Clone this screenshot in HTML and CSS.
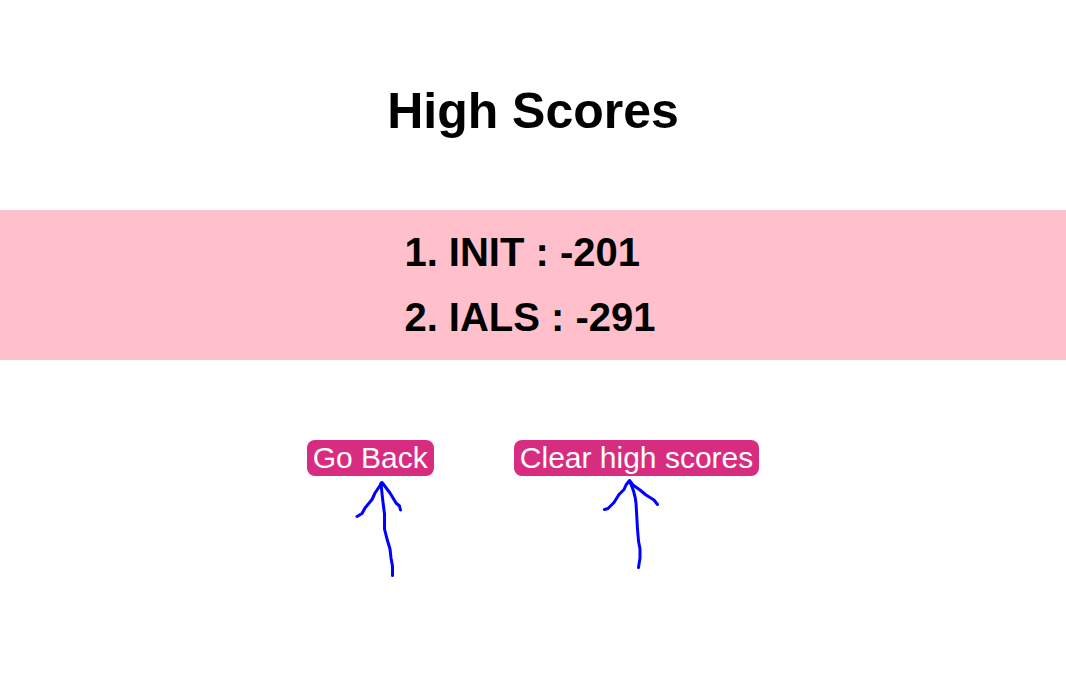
FILE: index.html
```html
<!DOCTYPE html>
<html lang="en">
<head>
<meta charset="utf-8">
<meta name="viewport" content="width=device-width, initial-scale=1">
<title>High Scores</title>
<link rel="stylesheet" href="styles.css">
</head>
<body>
<main class="page">
  <h1 class="title">High Scores</h1>
  <section class="scores" aria-label="Scores">
    <ol class="score-list">
      <li>1. INIT : -201</li>
      <li>2. IALS : -291</li>
    </ol>
  </section>
  <div class="actions">
    <div class="action">
      <button class="button" type="button">Go Back</button>
      <svg class="pen-mark pen-mark-back" width="80" height="109" viewBox="0 6 80 109" fill="none" stroke="#0000ff" stroke-width="3" stroke-linecap="round" stroke-linejoin="round">
        <path d="M 41 13 C 42 25 43 33 44.5 44 L 44.5 59 L 47 69 L 50 79 L 51 88 L 52.5 96 L 52.5 105.5"/>
        <path d="M 17 46.5 L 22 43.5 L 25 38 L 32 29.5 L 35 23 L 41 14 L 42 12.5 L 44 15 L 50 23 L 56 33 L 59.5 36 L 60.5 40"/>
      </svg>
    </div>
    <div class="action">
      <button class="button" type="button">Clear high scores</button>
      <svg class="pen-mark pen-mark-clear" width="80" height="109" viewBox="0 6 80 109" fill="none" stroke="#0000ff" stroke-width="3" stroke-linecap="round" stroke-linejoin="round">
        <path d="M 39.5 11 C 43 18 45 23 46 33 L 47.5 59 L 48.5 71 L 50 79 L 50 88 L 48.5 97.5"/>
        <path d="M 14.5 39.5 L 18 38.5 L 24 32.5 L 29 24.5 L 34 19.5 L 36 15 L 39.5 10.5 L 43 15 L 50 20 L 56 25 L 64 30 L 67.5 34.5"/>
      </svg>
    </div>
  </div>
</main>
</body>
</html>
```

FILE: styles.css
```css
body {
  margin: 0;
  background: #fff;
  color: #000;
  font-family: "Liberation Sans", Arial, sans-serif;
}

.page {
  box-sizing: border-box;
  min-height: 100vh;
  padding-top: 80px;
}

.title {
  margin: 0 0 68px;
  font-size: 50px;
  line-height: 62px;
  text-align: center;
}

.scores {
  display: flex;
  justify-content: center;
  padding: 10px 0;
  background: #ffc0cb;
}

.score-list {
  margin: 0;
  padding: 0 6px 0 0;
  list-style: none;
  font-size: 40px;
  font-weight: bold;
  line-height: 65px;
}

.actions {
  display: flex;
  flex-wrap: wrap;
  justify-content: center;
  gap: 80px;
  margin-top: 80px;
}

.button {
  display: block;
  padding: 0 6px;
  border: 0;
  border-radius: 8px;
  background: #d82c80;
  color: #fff;
  font-family: inherit;
  font-size: 30px;
  line-height: 36px;
  cursor: pointer;
}

.pen-mark {
  display: block;
}

.pen-mark-back {
  margin-left: 33px;
}

.pen-mark-clear {
  margin-left: 76px;
}
```
